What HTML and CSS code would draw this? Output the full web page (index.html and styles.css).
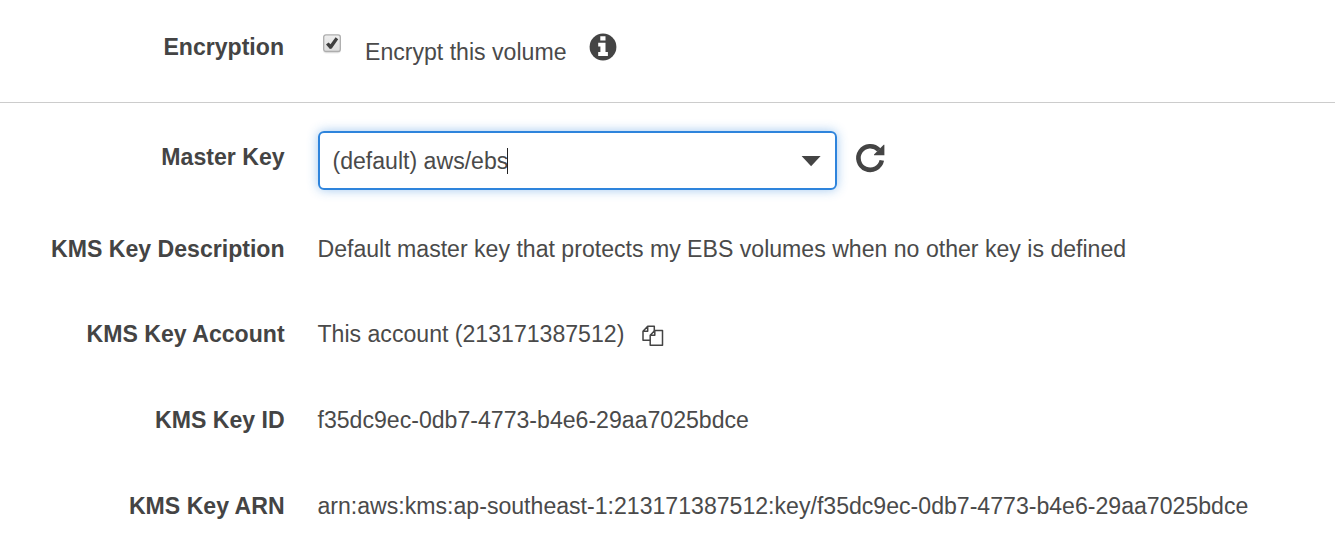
FILE: index.html
```html
<!DOCTYPE html>
<html lang="en">
<head>
<meta charset="utf-8">
<title>Volume encryption</title>
<link rel="stylesheet" href="styles.css">
</head>
<body>
<main class="form">
  <section class="row row-encryption">
    <div class="label">Encryption</div>
    <div class="field encrypt">
      <svg class="checkbox" width="20" height="22" viewBox="0 0 20 22" role="img" aria-label="Checked">
        <defs><linearGradient id="box" x1="0" y1="0" x2="0" y2="1"><stop offset="0" stop-color="#eee"/><stop offset="1" stop-color="#ddd"/></linearGradient></defs>
        <rect x="1" y="2.5" width="17.8" height="18" rx="3" fill="#eee"/>
        <rect x="1.7" y="1.9" width="16.6" height="16.6" rx="2.2" fill="url(#box)" stroke="#adadad" stroke-width="1.3"/>
        <path d="M4 11.5l2.5-2.1 2 1.9 5.1-7.1 2.6 2-6.4 9.4-1.9.3z" fill="#3f3f3f"/>
      </svg>
      <span class="encrypt-text">Encrypt this volume</span>
      <svg class="info" width="28" height="28" viewBox="0 0 28 28" role="img" aria-label="Information">
        <circle cx="14" cy="14" r="13.4" fill="#444"/>
        <path d="M11.3 3.2h5.2v4.3h-5.2zM9.2 9.7h7.3v9.4h2.4v4H9.2v-4h2.2v-5.7H9.2z" fill="#fff"/>
      </svg>
    </div>
  </section>
  <section class="row row-master">
    <div class="label">Master Key</div>
    <div class="field master">
      <div class="select">
        <span class="value">(default) aws/ebs</span><span class="caret"></span>
        <svg class="arrow" width="20" height="12" viewBox="0 0 20 12"><path d="M.6 1h19L10.1 11.3z" fill="#444"/></svg>
      </div>
      <svg class="refresh" width="32" height="32" viewBox="0 0 32 32" role="img" aria-label="Refresh">
        <path d="M27.8 18.4A11.8 11.8 0 1 1 24.8 7.9" fill="none" stroke="#444" stroke-width="4.6"/>
        <path d="M30.4 2.8v10.4H20v-.7l9.7-9.7z" fill="#444"/>
      </svg>
    </div>
  </section>
  <section class="row row-description">
    <div class="label">KMS Key Description</div>
    <div class="field">Default master key that protects my EBS volumes when no other key is defined</div>
  </section>
  <section class="row row-account">
    <div class="label">KMS Key Account</div>
    <div class="field account">
      <span>This account (213171387512)</span>
      <svg class="copy" width="22" height="22" viewBox="0 0 22 22" role="img" aria-label="Copy" fill="#fff" stroke="#444" stroke-width="1.5" stroke-linejoin="round">
        <path d="M5.7 1.2h6.6v14.1H1V6.2zM5.7 1.2v5H1"/>
        <path d="M12.8 5.4h7.7v14.8H8.2v-10zM12.8 5.4v4.8H8.2"/>
      </svg>
    </div>
  </section>
  <section class="row row-id">
    <div class="label">KMS Key ID</div>
    <div class="field">f35dc9ec-0db7-4773-b4e6-29aa7025bdce</div>
  </section>
  <section class="row row-arn">
    <div class="label">KMS Key ARN</div>
    <div class="field">arn:aws:kms:ap-southeast-1:213171387512:key/f35dc9ec-0db7-4773-b4e6-29aa7025bdce</div>
  </section>
</main>
</body>
</html>
```
FILE: styles.css
```css
body {
  margin: 0;
  background: #fff;
  color: #444;
  font: 23.1px/28px "Liberation Sans", Arial, sans-serif;
}

svg {
  display: block;
  flex: none;
}

.form {
  height: 549px;
  overflow: hidden;
}

.row {
  display: grid;
  grid-template-columns: 284.6px 1fr;
  column-gap: 32.9px;
  box-sizing: border-box;
  white-space: nowrap;
}

.label {
  font-weight: bold;
  text-align: right;
}

.field {
  color: #4a4a4a;
}

.row-encryption {
  height: 103px;
  padding-top: 33px;
  border-bottom: 1px solid #ccc;
}

.row-encryption .label {
  padding-right: 0.6px;
}

.row-master {
  column-gap: 33.4px;
  height: 132px;
  padding-top: 28px;
}

.row-master .label {
  padding-top: 12px;
}

.row-description {
  height: 85px;
}

.row-account,
.row-id {
  height: 86px;
}

.encrypt,
.master,
.account {
  display: flex;
  align-items: flex-start;
}

.checkbox {
  margin-left: 4.5px;
}

.encrypt-text {
  margin-left: 23px;
  padding-top: 5px;
}

.info {
  margin-left: 22.4px;
}

.select {
  display: flex;
  align-items: center;
  box-sizing: border-box;
  width: 519px;
  height: 59px;
  padding: 0 14px 0 12.5px;
  border: 2px solid #2e84dc;
  border-radius: 6px;
  box-shadow: 0 0 11px rgba(46, 132, 220, 0.45);
}

.caret {
  width: 1px;
  height: 26px;
  margin-left: -1px;
  background: #222;
}

.arrow {
  margin-left: auto;
}

.refresh {
  margin: 11px 0 0 17px;
}

.copy {
  margin: 5px 0 0 18px;
}
```
